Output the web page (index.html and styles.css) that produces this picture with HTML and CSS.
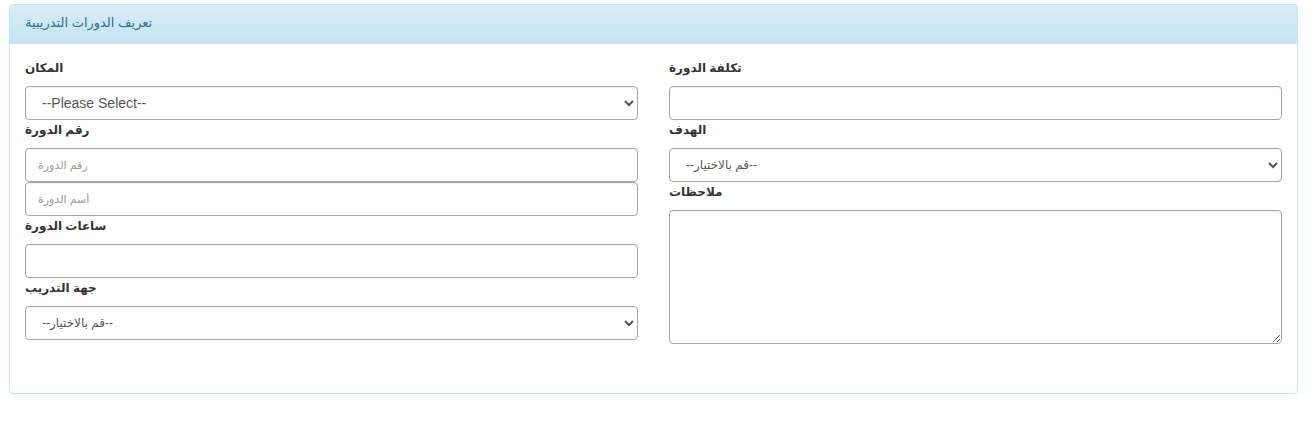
FILE: index.html
```html
<!DOCTYPE html>
<html lang="ar">
<head>
<meta charset="utf-8">
<title>تعريف الدورات التدريبية</title>
<link rel="stylesheet" href="styles.css">
</head>
<body>
<div class="page">
  <div class="panel">
    <div class="panel-heading">تعريف الدورات التدريبية</div>
    <div class="panel-body">
      <div class="col">
        <label class="lbl">المكان</label>
        <select class="ctl sel sel-en"><option>--Please Select--</option></select>
        <label class="lbl">رقم الدورة</label>
        <input class="ctl" type="text" placeholder="رقم الدورة">
        <input class="ctl" type="text" placeholder="أسم الدورة">
        <label class="lbl">ساعات الدورة</label>
        <input class="ctl" type="text">
        <label class="lbl">جهة التدريب</label>
        <select class="ctl sel sel-ar"><option>--قم بالاختيار--</option></select>
      </div>
      <div class="col">
        <label class="lbl">تكلفة الدورة</label>
        <input class="ctl" type="text">
        <label class="lbl">الهدف</label>
        <select class="ctl sel sel-ar"><option>--قم بالاختيار--</option></select>
        <label class="lbl">ملاحظات</label>
        <textarea class="ctl area"></textarea>
      </div>
    </div>
  </div>
</div>
</body>
</html>
```
FILE: styles.css
```css
html, body {
  margin: 0;
  padding: 0;
  background: #fff;
}
body {
  font-family: "Liberation Sans", "DejaVu Sans", sans-serif;
  font-size: 14px;
  color: #333;
}
.page {
  padding: 4px 14px 0 9px;
}
.panel {
  border: 1px solid #bce8f1;
  border-radius: 4px;
  background: #fff;
}
.panel-heading {
  height: 38px;
  line-height: 36px;
  padding: 0 15px;
  color: #31708f;
  font-size: 13px;
  background: linear-gradient(to bottom, #d9edf7 0%, #c4e3f3 100%);
  border-bottom: 1px solid #bce8f1;
  border-radius: 3px 3px 0 0;
}
.panel-body {
  display: grid;
  grid-template-columns: 1fr 1fr;
  column-gap: 31px;
  padding: 14px 15px 49px 15px;
  align-items: start;
}
.col {
  display: flex;
  flex-direction: column;
}
.lbl {
  display: block;
  height: 20px;
  line-height: 20px;
  margin-bottom: 8px;
  font-weight: bold;
  font-size: 12px;
  color: #333;
}
.ctl {
  box-sizing: border-box;
  width: 100%;
  height: 34px;
  margin: 0;
  border: 1px solid #a6a6a6;
  border-radius: 4px;
  background: #fff;
  padding: 6px 12px;
  font-family: "Liberation Sans", "DejaVu Sans", sans-serif;
  font-size: 11px;
  color: #555;
  box-shadow: inset 0 1px 1px rgba(0,0,0,.05);
  outline: none;
}
.ctl::placeholder {
  color: #999;
}
.sel-en {
  font-size: 14px;
}
.sel-ar {
  font-size: 12px;
}
.area {
  height: 134px;
  resize: vertical;
}
```
